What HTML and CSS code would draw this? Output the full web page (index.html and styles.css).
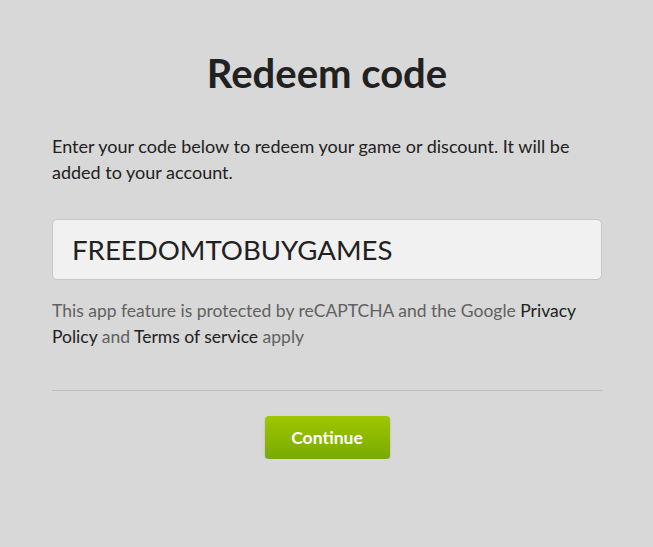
FILE: index.html
```html
<!DOCTYPE html>
<html lang="en">

<head>
    <meta charset="UTF-8">
    <title>Redeem code</title>
    <link rel="stylesheet" href="styles.css">
</head>

<body>
    <div class="container">
        <h1>Redeem code</h1>

        <p class="intro">Enter your code below to redeem your game or discount. It will be added to your account.</p>

        <input type="text" class="code-input" value="FREEDOMTOBUYGAMES">

        <p class="notice">This app feature is protected by reCAPTCHA and the Google <a href="#">Privacy Policy</a> and <a href="#">Terms of service</a> apply</p>

        <hr class="divider">

        <div class="actions">
            <button type="button" class="btn-continue">Continue</button>
        </div>
    </div>
</body>

</html>
```

FILE: styles.css
```css
html,
body {
    margin: 0;
    padding: 0;
    background-color: #d8d8d8;
}

body {
    font-family: Lato, "Open Sans", sans-serif;
    color: #212121;
}

.container {
    width: 550px;
    margin: 0 auto;
    padding: 49px 0 0 1px;
}

h1 {
    margin: 0;
    text-align: center;
    font-size: 40px;
    font-weight: bold;
    line-height: 48px;
    color: #212121;
}

.intro {
    margin: 36px 0 0;
    font-size: 18px;
    line-height: 26px;
}

.code-input {
    display: block;
    box-sizing: border-box;
    width: 100%;
    height: 61px;
    margin-top: 34px;
    padding: 0 19px;
    font-family: inherit;
    font-size: 27.6px;
    color: #212121;
    background-color: #f1f1f1;
    border: 1px solid #c6c6c6;
    border-radius: 5px;
    outline: none;
}

.notice {
    margin: 18px 0 0;
    font-size: 17.5px;
    line-height: 26px;
    color: #616161;
}

.notice a {
    color: #212121;
    text-decoration: none;
}

.divider {
    margin: 40px 0 0;
    border: none;
    border-top: 1px solid #bdbdbd;
}

.actions {
    display: flex;
    justify-content: center;
    padding-top: 25px;
}

.btn-continue {
    width: 125px;
    height: 43px;
    font-family: inherit;
    font-size: 17.5px;
    font-weight: bold;
    color: #fff;
    background: linear-gradient(#a0c600, #78aa00);
    border: none;
    border-radius: 4px;
    box-shadow: 0 1px 2px rgba(0, 0, 0, 0.2);
    cursor: pointer;
}
```
